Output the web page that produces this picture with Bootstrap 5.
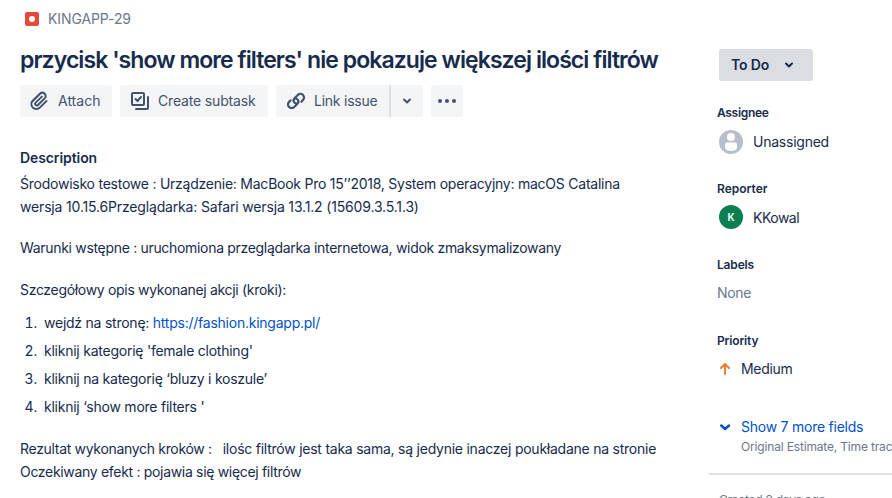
<!DOCTYPE html>
<html lang="pl">
<head>
<meta charset="utf-8">
<meta name="viewport" content="width=device-width, initial-scale=1">
<title>KINGAPP-29</title>
<link href="https://cdn.jsdelivr.net/npm/bootstrap@5.3.0/dist/css/bootstrap.min.css" rel="stylesheet">
<style>
body{font:400 14px/20px Inter,"Liberation Sans",sans-serif;color:#172b4d;background:#fff;height:498px;overflow:hidden}
svg{display:block;flex:none}
.issue{width:709px;padding:9px 20px 0;white-space:nowrap}
.crumb{color:#6b778c;padding-left:5px;gap:9px;letter-spacing:-.1px}
h1.summary{font-size:23px;font-weight:600;line-height:28px;margin:17px 0 11px;letter-spacing:-.93px}
.tool{--bs-btn-bg:#f4f5f7;--bs-btn-color:#42526e;--bs-btn-border-width:0;--bs-btn-padding-y:0;--bs-btn-padding-x:8px;--bs-btn-font-size:14px;--bs-btn-line-height:20px;--bs-btn-border-radius:3px;--bs-btn-hover-bg:#ebecf0;--bs-btn-hover-color:#42526e;height:32px;display:flex;align-items:center;justify-content:flex-start}
.tool svg{margin-right:6px}
.tool.icon-only{width:32px;padding:0;justify-content:center}
.tool.icon-only svg{margin:0}
.tool.split{border-left:2px solid #dfe1e6;width:34px}
.desc-title{font-size:14px;line-height:20px;font-weight:600;margin:31px 0 4px;letter-spacing:-.09px}
.desc p{line-height:23px;margin:0 0 18px}
.desc ol{margin:0 0 20px;padding-left:24px}
.desc li{margin-bottom:8px}
.desc li::marker{content:counter(list-item) ".\a0\a0"}
.desc a,.more a{color:#0052cc;text-decoration:none}
.t1{letter-spacing:-.165px}
.t2{letter-spacing:-.24px}
.t3{letter-spacing:-.315px}
.side{width:183px;padding:49px 0 0 8px;white-space:nowrap}
.status{--bs-btn-bg:#dadde2;--bs-btn-color:#172b4d;width:94px;margin-left:2px;padding:0 19px 0 12px;font-weight:600;justify-content:space-between;letter-spacing:-.17px}
.status svg{margin:0}
.field-name{font-size:12px;line-height:16px;font-weight:600;margin:0}
.field{height:76px}
.person{gap:10px;padding-left:2px}
.avatar{width:24px;height:24px;border-radius:50%;background:#0c7f52;color:#fff;font-size:10px;font-weight:600}
.note{color:#6b778c;font-size:12px}
.dates{border-top:2px solid #dfe1e6;margin-left:-8px;padding:15px 0 0 10px}
</style>
</head>
<body class="d-flex">
<main class="issue flex-shrink-0">
  <div class="crumb d-flex align-items-center">
    <svg width="14" height="14"><rect width="14" height="14" rx="2" fill="#e5493a"/><circle cx="7" cy="7" r="3" fill="#fff"/></svg>
    <span>KINGAPP-29</span>
  </div>
  <h1 class="summary">przycisk 'show more filters' nie pokazuje większej ilości filtrów</h1>
  <div class="d-flex gap-2">
    <button class="btn tool" style="width:92px">
      <svg width="24" height="24" viewBox="0 0 24 24" fill="currentColor"><path d="M11.643 17.965c-1.530 1.495-4.016 1.496-5.542.004a3.773 3.773 0 0 1 .002-5.412l7.147-6.985a2.316 2.316 0 0 1 3.233-.003c.893.873.895 2.282.004 3.153l-6.703 6.550a.653.653 0 0 1-.914-.008.62.62 0 0 1 0-.902l6.229-6.087a.941.941 0 0 0 0-1.353.995.995 0 0 0-1.384 0l-6.230 6.087a2.502 2.502 0 0 0 .001 3.607 2.643 2.643 0 0 0 3.683.009l6.703-6.550a4.188 4.188 0 0 0-.003-6.012 4.410 4.410 0 0 0-6.152.003L4.570 11.051a5.643 5.643 0 0 0-.001 8.115c2.343 2.290 6.114 2.290 8.457.001l6.730-6.576a.94.94 0 0 0 0-1.353.995.995 0 0 0-1.384 0z" transform="translate(-.5 0)"/></svg>
      <span>Attach</span></button>
    <button class="btn tool t1" style="width:148px">
      <svg width="24" height="24" viewBox="0 0 24 24" fill="none" stroke="currentColor" stroke-width="2"><rect x="4" y="4" width="12" height="12" rx="1"/><path d="M20 8v11a1 1 0 0 1-1 1H8" stroke-linecap="round"/><path d="m7.500 10 2 2 3.500-4" stroke-linecap="round" stroke-linejoin="round"/></svg>
      <span>Create subtask</span></button>
    <div class="d-flex">
      <button class="btn tool t2 rounded-end-0" style="width:113px">
        <svg width="24" height="24" viewBox="0 0 24 24" fill="none" stroke="currentColor" stroke-width="2.200" stroke-linecap="round"><path d="M12.600 14.600a3.700 3.700 0 0 1-2.200-1.100c-1.200-1.300-1-3.100.2-4.300l3.200-3.200a3.600 3.600 0 0 1 5.200 5.100l-1.500 1.500"/><path d="M11.400 9.400a3.700 3.700 0 0 1 2.200 1.100c1.200 1.300 1 3.100-.2 4.300l-3.200 3.200a3.600 3.600 0 0 1-5.200-5.100l1.500-1.500"/></svg>
        <span>Link issue</span></button>
      <button class="btn tool icon-only split rounded-start-0" aria-label="Link menu"><svg width="10" height="6" viewBox="0 0 10 6" fill="none" stroke="currentColor" stroke-width="2" stroke-linecap="round" stroke-linejoin="round"><path d="m2 1.500 3 3 3-3"/></svg></button>
    </div>
    <button class="btn tool icon-only" aria-label="More"><svg width="18" height="4" fill="currentColor"><circle cx="2" cy="2" r="2"/><circle cx="9" cy="2" r="2"/><circle cx="16" cy="2" r="2"/></svg></button>
  </div>
  <h2 class="desc-title">Description</h2>
  <div class="desc">
    <p><span class="t2">Środowisko testowe : Urządzenie: MacBook Pro 15’’2018, System operacyjny: macOS Catalina</span><br><span class="t1">wersja 10.15.6Przeglądarka: Safari wersja 13.1.2 (15609.3.5.1.3)</span></p>
    <p class="t3" style="margin-bottom:19px">Warunki wstępne : uruchomiona przeglądarka internetowa, widok zmaksymalizowany</p>
    <p class="t3" style="margin-bottom:12px">Szczegółowy opis wykonanej akcji (kroki):</p>
    <ol class="t2">
      <li>wejdź na stronę: <a href="#">https://fashion.kingapp.pl/</a></li>
      <li class="t2">kliknij kategorię 'female clothing'</li>
      <li>kliknij na kategorię ‘bluzy i koszule’</li>
      <li class="t2">kliknij ‘show more filters '</li>
    </ol>
    <p><span class="t3">Rezultat wykonanych kroków :&nbsp;&nbsp; </span><span class="t2">ilośc filtrów jest taka sama, są jedynie inaczej poukładane na stronie</span><br><span class="t3">Oczekiwany efekt : pojawia się więcej filtrów</span></p>
  </div>
</main>
<aside class="side">
  <button class="btn tool status">To Do<svg width="10" height="6" viewBox="0 0 10 6" fill="none" stroke="currentColor" stroke-width="2" stroke-linecap="round" stroke-linejoin="round"><path d="m2 1.500 3 3 3-3"/></svg></button>
  <div class="field" style="margin-top:24px">
    <h3 class="field-name t3">Assignee</h3>
    <div class="person d-flex align-items-center" style="margin-top:9px"><svg width="24" height="24"><circle cx="12" cy="12" r="12" fill="#b8bfca"/><circle cx="12" cy="7" r="4" fill="#fff"/><path d="M6 14.500a2 2 0 0 1 2-2h8a2 2 0 0 1 2 2V17q0 4-6 4t-6-4z" fill="#fff"/></svg><span class="t2">Unassigned</span></div>
  </div>
  <div class="field">
    <h3 class="field-name">Reporter</h3>
    <div class="person d-flex align-items-center" style="margin-top:8px"><span class="avatar d-flex align-items-center justify-content-center">K</span><span style="letter-spacing:-.5px;padding-top:2px">KKowal</span></div>
  </div>
  <div class="field">
    <h3 class="field-name t1">Labels</h3>
    <div style="margin-top:10px;color:#6b778c" class="t3">None</div>
  </div>
  <div class="field">
    <h3 class="field-name t1">Priority</h3>
    <div class="d-flex align-items-center" style="margin-top:10px;gap:10px;padding-left:3px"><svg width="11" height="12" fill="none" stroke="#e97f33" stroke-width="2" stroke-linecap="round" stroke-linejoin="round"><path d="M5 11V1.500M1 5l4-4 4 4"/></svg><span class="t3">Medium</span></div>
  </div>
  <div class="more" style="margin-top:8px;padding-left:3px">
    <div class="d-flex align-items-center" style="gap:10px"><svg width="11" height="8" fill="none" stroke="#0052cc" stroke-width="2.400" stroke-linecap="round" stroke-linejoin="round"><path d="m1.200 2.500 3.900 3.500 3.900-3.500"/></svg><a href="#" class="t2">Show 7 more fields</a></div>
    <div class="note t1 overflow-hidden" style="padding-left:21px">Original Estimate, Time trac</div>
  </div>
  <div class="dates note t2" style="margin-top:16px">Created 2 days ago</div>
</aside>
</body>
</html>
